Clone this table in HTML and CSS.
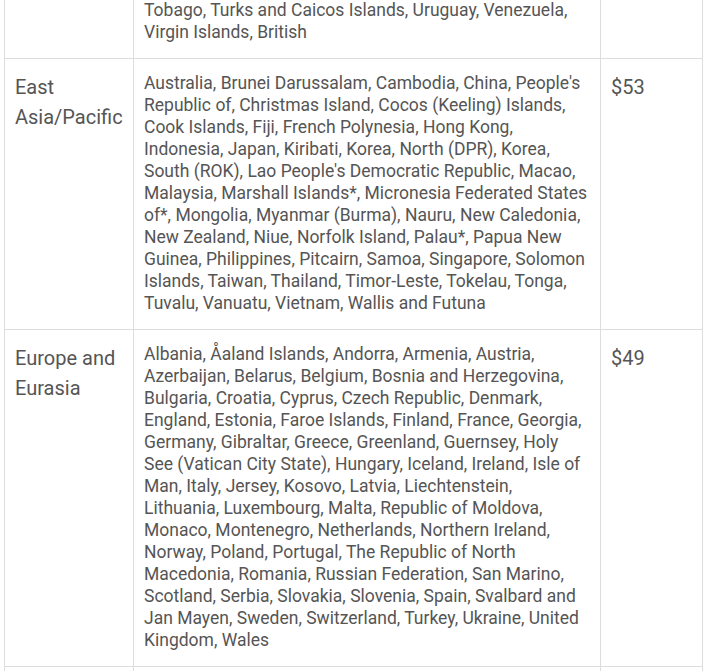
FILE: index.html
```html
<!DOCTYPE html>
<html lang="en">
<head>
<meta charset="utf-8">
<title>Fees by region</title>
<link rel="stylesheet" href="styles.css">
</head>
<body>
<table class="fees">
  <colgroup>
    <col class="col-region">
    <col class="col-countries">
    <col class="col-price">
  </colgroup>
  <tbody>
    <tr>
      <td class="region"></td>
      <td class="countries">Tobago, Turks and Caicos Islands, Uruguay, Venezuela, Virgin Islands, British</td>
      <td class="price"></td>
    </tr>
    <tr>
      <td class="region">East Asia/Pacific</td>
      <td class="countries">Australia, Brunei Darussalam, Cambodia, China, People's Republic of, Christmas Island, Cocos (Keeling) Islands, Cook Islands, Fiji, French Polynesia, Hong Kong, Indonesia, Japan, Kiribati, Korea, North (DPR), Korea, South (ROK), Lao People's Democratic Republic, Macao, Malaysia, Marshall Islands*, Micronesia Federated States of*, Mongolia, Myanmar (Burma), Nauru, New Caledonia, New Zealand, Niue, Norfolk Island, Palau*, Papua New Guinea, Philippines, Pitcairn, Samoa, Singapore, Solomon Islands, Taiwan, Thailand, Timor-Leste, Tokelau, Tonga, Tuvalu, Vanuatu, Vietnam, Wallis and Futuna</td>
      <td class="price">$53</td>
    </tr>
    <tr>
      <td class="region">Europe and Eurasia</td>
      <td class="countries">Albania, Åaland Islands, Andorra, Armenia, Austria, Azerbaijan, Belarus, Belgium, Bosnia and Herzegovina, Bulgaria, Croatia, Cyprus, Czech Republic, Denmark, England, Estonia, Faroe Islands, Finland, France, Georgia, Germany, Gibraltar, Greece, Greenland, Guernsey, Holy See (Vatican City State), Hungary, Iceland, Ireland, Isle of Man, Italy, Jersey, Kosovo, Latvia, Liechtenstein, Lithuania, Luxembourg, Malta, Republic of Moldova, Monaco, Montenegro, Netherlands, Northern Ireland, Norway, Poland, Portugal, The Republic of North Macedonia, Romania, Russian Federation, San Marino, Scotland, Serbia, Slovakia, Slovenia, Spain, Svalbard and Jan Mayen, Sweden, Switzerland, Turkey, Ukraine, United Kingdom, Wales</td>
      <td class="price">$49</td>
    </tr>
    <tr>
      <td class="region">&nbsp;</td>
      <td class="countries">&nbsp;</td>
      <td class="price">&nbsp;</td>
    </tr>
  </tbody>
</table>
</body>
</html>
```
FILE: styles.css
```css
html, body {
  margin: 0;
  padding: 0;
  background: #ffffff;
  overflow: hidden;
}

body {
  font-family: Roboto, "Liberation Sans", Arial, sans-serif;
  color: #555555;
}

.fees {
  border-collapse: collapse;
  table-layout: fixed;
  width: 698px;
  margin: -15px 0 0 4px;
}

.col-region { width: 129px; }
.col-countries { width: 467px; }
.col-price { width: 102px; }

.fees td {
  border: 1px solid #dddddd;
  vertical-align: top;
  padding: 13px 10px 15px 10px;
}

.region,
.price {
  font-size: 20px;
  line-height: 30px;
}

.countries {
  font-size: 17.5px;
  line-height: 22px;
}
```
